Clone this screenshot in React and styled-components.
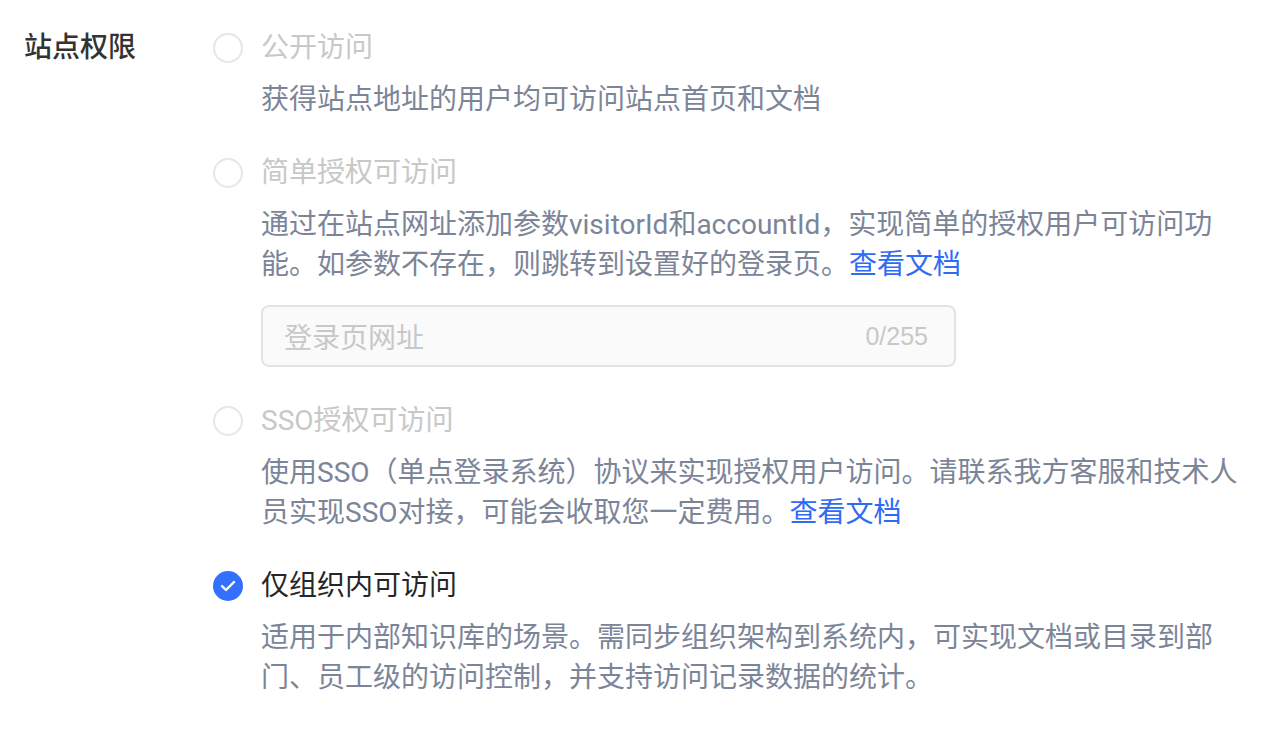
import React from "react";
import styled, { createGlobalStyle } from "styled-components";

const Global = createGlobalStyle`
  html, body { margin: 0; padding: 0; background: #ffffff; }
  body { font-family: Roboto, "Noto Sans CJK SC", sans-serif; }
`;

const Page = styled.div`
  display: flex;
  padding: 28px 0 0 24px;
`;

const Label = styled.div`
  width: 189px;
  flex: none;
  font-size: 28px;
  line-height: 40px;
  color: #333333;
  font-weight: 500;
`;

const Options = styled.div`
  display: flex;
  flex-direction: column;
  gap: 33px;
  width: 1026px;
`;

const Option = styled.div`
  display: flex;
  flex-direction: column;
`;

const Head = styled.div`
  display: flex;
  align-items: center;
  gap: 18px;
  height: 40px;
`;

const Radio = styled.span`
  width: 30px;
  height: 30px;
  box-sizing: border-box;
  border-radius: 50%;
  flex: none;
  display: flex;
  align-items: center;
  justify-content: center;
  border: ${(p) => (p.$checked ? "none" : "2px solid #e6e6e6")};
  background: ${(p) => (p.$checked ? "#3370ff" : "#ffffff")};
`;

const Title = styled.span`
  font-size: 28px;
  line-height: 40px;
  color: ${(p) => (p.$disabled ? "#c8c8c8" : "#262626")};
`;

const Body = styled.div`
  padding-left: 48px;
  margin-top: 12px;
  display: flex;
  flex-direction: column;
  gap: 20px;
`;

const Desc = styled.div`
  font-size: 28px;
  line-height: 40px;
  color: #7c8598;
`;

const Link = styled.a`
  color: #2f6bf5;
  text-decoration: none;
`;

const Input = styled.div`
  width: 695px;
  height: 62px;
  box-sizing: border-box;
  border: 2px solid #e3e3e3;
  border-radius: 8px;
  background: #fafafa;
  display: flex;
  align-items: center;
  justify-content: space-between;
  padding: 0 26px 0 21px;
  margin-bottom: 1px;
`;

const Placeholder = styled.span`
  font-size: 28px;
  color: #c8c8c8;
`;

const Count = styled.span`
  font-size: 25px;
  color: #c8c8c8;
  font-family: "Liberation Sans", Roboto, sans-serif;
`;

const Check = () => (
  <svg width="16" height="12" viewBox="0 0 16 12">
    <path d="M2 6.2 L6 10 L14 2" fill="none" stroke="#fff" strokeWidth="2.4" strokeLinecap="round" strokeLinejoin="round" />
  </svg>
);

export default function App() {
  return (
    <>
      <Global />
      <Page>
        <Label>站点权限</Label>
        <Options>
          <Option>
            <Head>
              <Radio />
              <Title $disabled>公开访问</Title>
            </Head>
            <Body>
              <Desc>获得站点地址的用户均可访问站点首页和文档</Desc>
            </Body>
          </Option>
          <Option>
            <Head>
              <Radio />
              <Title $disabled>简单授权可访问</Title>
            </Head>
            <Body>
              <Desc>
                通过在站点网址添加参数visitorId和accountId，实现简单的授权用户可访问功能。如参数不存在，则跳转到设置好的登录页。<Link href="#">查看文档</Link>
              </Desc>
              <Input>
                <Placeholder>登录页网址</Placeholder>
                <Count>0/255</Count>
              </Input>
            </Body>
          </Option>
          <Option>
            <Head>
              <Radio />
              <Title $disabled>SSO授权可访问</Title>
            </Head>
            <Body>
              <Desc>
                使用SSO（单点登录系统）协议来实现授权用户访问。请联系我方客服和技术人员实现SSO对接，可能会收取您一定费用。<Link href="#">查看文档</Link>
              </Desc>
            </Body>
          </Option>
          <Option>
            <Head>
              <Radio $checked>
                <Check />
              </Radio>
              <Title>仅组织内可访问</Title>
            </Head>
            <Body>
              <Desc>
                适用于内部知识库的场景。需同步组织架构到系统内，可实现文档或目录到部门、员工级的访问控制，并支持访问记录数据的统计。
              </Desc>
            </Body>
          </Option>
        </Options>
      </Page>
    </>
  );
}
